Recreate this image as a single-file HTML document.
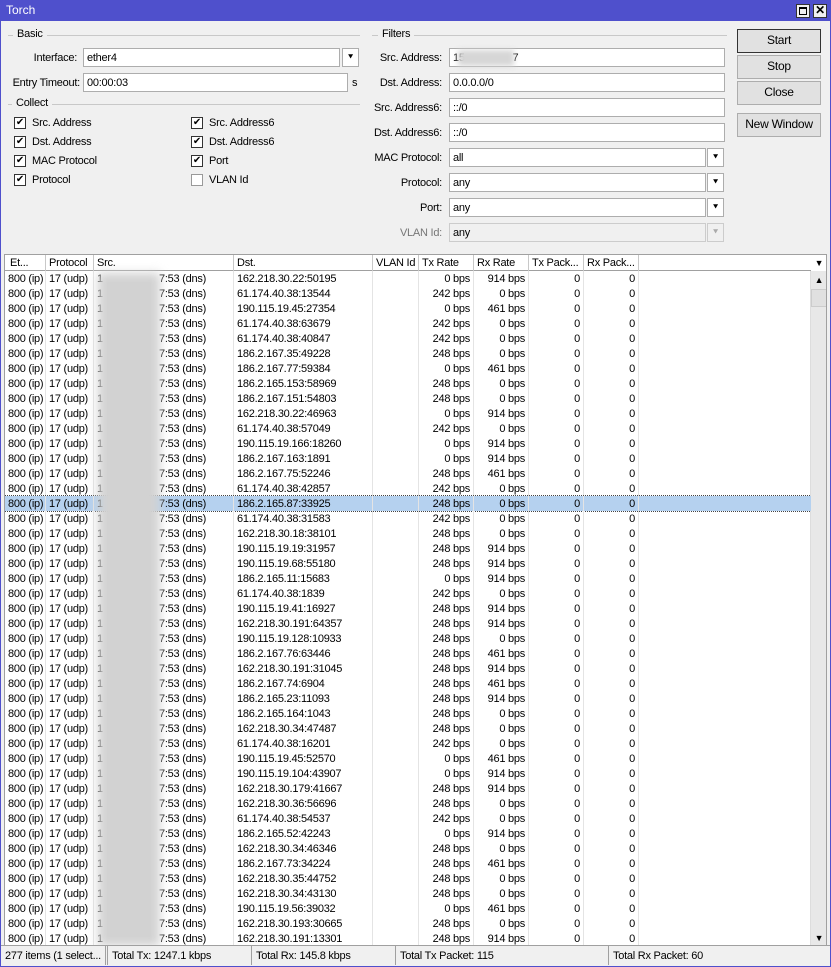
<!DOCTYPE html>
<html><head><meta charset="utf-8"><style>
*{box-sizing:border-box;margin:0;padding:0}
body{width:831px;height:967px;background:#4f50cc;font-family:"Liberation Sans",sans-serif;font-size:11px;letter-spacing:-0.25px;color:#000;position:relative;overflow:hidden}
.a{position:absolute}
#win{position:absolute;left:1px;top:21px;width:829px;height:945px;background:#f0f0f0}
.title{left:6px;top:3px;color:#fff;font-size:12px;letter-spacing:0}
.tb{top:4px;width:14px;height:14px;background:#f0f0f0;border:1px solid #333}
.lbl{text-align:right;white-space:nowrap}
.inp{background:#fff;border:1px solid #adadad;height:19px;padding:3px 3px 0;white-space:nowrap;overflow:hidden}
.dd{background:#fff;border:1px solid #adadad;width:17px;height:19px;font-size:9px;text-align:center;line-height:16px}
.leg{background:#f0f0f0;padding:0 4px}
.hl{height:1px;background:#c8c8c8}
.cb{width:12px;height:12px;border:1px solid #333;background:#fff;font-size:10px;line-height:10px;text-align:center}
.btn{left:737px;width:84px;height:24px;border:1px solid #adadad;background:#e1e1e1;text-align:center;line-height:21px;font-size:12px}
#tbl{left:4px;top:254px;width:823px;height:692px;background:#fff;border:1px solid #a0a0a0;overflow:hidden}
.hdr{position:absolute;top:0;height:16px;left:0;width:806px;background:#fff;border-bottom:1px solid #a0a0a0}
.hdr span{position:absolute;top:0;height:16px;border-right:1px solid #c8c8c8;padding:2px 3px;white-space:nowrap;overflow:hidden}
.r{position:absolute;left:0;width:806px;height:15px;white-space:nowrap}
.r span{position:absolute;top:0;height:15px;padding:2px 3px 0;border-right:1px solid #e4e4e4;overflow:hidden}
.c0{left:0;width:41px}.c1{left:41px;width:48px}.c2{left:89px;width:140px}.c3{left:229px;width:139px}.c4{left:368px;width:46px}.c5{left:414px;width:55px;text-align:right}.c6{left:469px;width:55px;text-align:right}.c7{left:524px;width:55px;text-align:right}.c8{left:579px;width:55px;text-align:right}
.sel{background:#b5d1ef;outline:1px dotted #444}
.blur{position:absolute;left:98px;top:273px;width:62px;height:673px;background:#d2d2d2;filter:blur(5px)}
.st{top:946px;height:19px;border-right:1px solid #a0a0a0;padding:4px 4px 0;white-space:nowrap}
</style></head><body>
<div class="a title">Torch</div>
<div class="a tb" style="left:796px"><div style="margin:2px;width:8px;height:8px;border:1px solid #000;border-top-width:2px"></div></div>
<div class="a tb" style="left:813px;font-size:12px;font-weight:bold;line-height:11px;text-align:center">✕</div>
<div id="win"></div>

<div class="a hl" style="left:8px;top:35px;width:352px"></div>
<div class="a leg" style="left:13px;top:28px">Basic</div>
<div class="a lbl" style="left:0;top:52px;width:77px">Interface:</div>
<div class="a inp" style="left:83px;top:48px;width:257px">ether4</div>
<div class="a dd" style="left:342px;top:48px">⯆</div>
<div class="a lbl" style="left:0;top:77px;width:80px">Entry Timeout:</div>
<div class="a inp" style="left:83px;top:73px;width:265px">00:00:03</div>
<div class="a" style="left:352px;top:77px">s</div>
<div class="a hl" style="left:8px;top:104px;width:352px"></div>
<div class="a leg" style="left:12px;top:97px">Collect</div>

<div class="a cb" style="left:14px;top:117px">✔</div><div class="a" style="left:32px;top:117px">Src. Address</div>
<div class="a cb" style="left:14px;top:136px">✔</div><div class="a" style="left:32px;top:136px">Dst. Address</div>
<div class="a cb" style="left:14px;top:155px">✔</div><div class="a" style="left:32px;top:155px">MAC Protocol</div>
<div class="a cb" style="left:14px;top:174px">✔</div><div class="a" style="left:32px;top:174px">Protocol</div>
<div class="a cb" style="left:191px;top:117px">✔</div><div class="a" style="left:209px;top:117px">Src. Address6</div>
<div class="a cb" style="left:191px;top:136px">✔</div><div class="a" style="left:209px;top:136px">Dst. Address6</div>
<div class="a cb" style="left:191px;top:155px">✔</div><div class="a" style="left:209px;top:155px">Port</div>
<div class="a cb" style="left:191px;top:174px;border-color:#999"></div><div class="a" style="left:209px;top:174px">VLAN Id</div>

<div class="a hl" style="left:372px;top:35px;width:355px"></div>
<div class="a leg" style="left:378px;top:28px">Filters</div>
<div class="a lbl" style="left:360px;top:52px;width:82px">Src. Address:</div>
<div class="a inp" style="left:449px;top:48px;width:276px">15&nbsp;&nbsp;&nbsp;&nbsp;&nbsp;&nbsp;&nbsp;&nbsp;&nbsp;&nbsp;&nbsp;&nbsp;&nbsp;&nbsp;&nbsp;&nbsp;&nbsp;7</div>
<div class="a" style="left:458px;top:50px;width:56px;height:16px;background:#d6d6d6;filter:blur(3px)"></div>
<div class="a lbl" style="left:360px;top:77px;width:82px">Dst. Address:</div>
<div class="a inp" style="left:449px;top:73px;width:276px">0.0.0.0/0</div>
<div class="a lbl" style="left:360px;top:102px;width:82px">Src. Address6:</div>
<div class="a inp" style="left:449px;top:98px;width:276px">::/0</div>
<div class="a lbl" style="left:360px;top:127px;width:82px">Dst. Address6:</div>
<div class="a inp" style="left:449px;top:123px;width:276px">::/0</div>
<div class="a lbl" style="left:360px;top:152px;width:82px">MAC Protocol:</div>
<div class="a inp" style="left:449px;top:148px;width:257px">all</div><div class="a dd" style="left:707px;top:148px">⯆</div>
<div class="a lbl" style="left:360px;top:177px;width:82px">Protocol:</div>
<div class="a inp" style="left:449px;top:173px;width:257px">any</div><div class="a dd" style="left:707px;top:173px">⯆</div>
<div class="a lbl" style="left:360px;top:202px;width:82px">Port:</div>
<div class="a inp" style="left:449px;top:198px;width:257px">any</div><div class="a dd" style="left:707px;top:198px">⯆</div>
<div class="a lbl" style="left:360px;top:227px;width:82px;color:#777">VLAN Id:</div>
<div class="a inp" style="left:449px;top:223px;width:257px;background:#f0f0f0;border-color:#ccc">any</div><div class="a dd" style="left:707px;top:223px;background:#f0f0f0;border-color:#ccc;color:#aaa">⯆</div>

<div class="a btn" style="top:29px;border-color:#333">Start</div>
<div class="a btn" style="top:55px">Stop</div>
<div class="a btn" style="top:81px">Close</div>
<div class="a btn" style="top:113px">New Window</div>

<div id="tbl" class="a">
<div class="hdr"><span style="left:0;width:41px;padding-left:5px">Et...</span><span style="left:41px;width:48px">Protocol</span><span style="left:89px;width:140px">Src.</span><span style="left:229px;width:139px">Dst.</span><span style="left:368px;width:46px">VLAN Id</span><span style="left:414px;width:55px">Tx Rate</span><span style="left:469px;width:55px">Rx Rate</span><span style="left:524px;width:55px">Tx Pack...</span><span style="left:579px;width:55px">Rx Pack...</span></div>
<div class="a" style="left:806px;top:0;width:16px;height:16px;text-align:center;font-size:9px;line-height:16px">▼</div>
<div class="a" style="left:805px;top:16px;width:17px;height:675px;background:#e8e8e8;border-left:1px solid #ddd"></div>
<div class="a" style="left:806px;top:17px;width:16px;height:16px;text-align:center;font-size:9px;line-height:16px">▲</div>
<div class="a" style="left:806px;top:34px;width:16px;height:18px;background:#e0e0e0;border:1px solid #ccc"></div>
<div class="a" style="left:806px;top:676px;width:16px;height:15px;text-align:center;font-size:9px;line-height:15px">▼</div>
</div>
<div class="a" style="left:5px;top:271px;width:806px;height:675px;overflow:hidden">
<div class="r" style="top:0"><span class="c0">800 (ip)</span><span class="c1">17 (udp)</span><span class="c2">1&nbsp;&nbsp;&nbsp;&nbsp;&nbsp;&nbsp;&nbsp;&nbsp;&nbsp;&nbsp;&nbsp;&nbsp;&nbsp;&nbsp;&nbsp;&nbsp;&nbsp;&nbsp;&nbsp;&nbsp;7:53 (dns)</span><span class="c3">162.218.30.22:50195</span><span class="c4"></span><span class="c5">0 bps</span><span class="c6">914 bps</span><span class="c7">0</span><span class="c8">0</span></div>
<div class="r" style="top:15px"><span class="c0">800 (ip)</span><span class="c1">17 (udp)</span><span class="c2">1&nbsp;&nbsp;&nbsp;&nbsp;&nbsp;&nbsp;&nbsp;&nbsp;&nbsp;&nbsp;&nbsp;&nbsp;&nbsp;&nbsp;&nbsp;&nbsp;&nbsp;&nbsp;&nbsp;&nbsp;7:53 (dns)</span><span class="c3">61.174.40.38:13544</span><span class="c4"></span><span class="c5">242 bps</span><span class="c6">0 bps</span><span class="c7">0</span><span class="c8">0</span></div>
<div class="r" style="top:30px"><span class="c0">800 (ip)</span><span class="c1">17 (udp)</span><span class="c2">1&nbsp;&nbsp;&nbsp;&nbsp;&nbsp;&nbsp;&nbsp;&nbsp;&nbsp;&nbsp;&nbsp;&nbsp;&nbsp;&nbsp;&nbsp;&nbsp;&nbsp;&nbsp;&nbsp;&nbsp;7:53 (dns)</span><span class="c3">190.115.19.45:27354</span><span class="c4"></span><span class="c5">0 bps</span><span class="c6">461 bps</span><span class="c7">0</span><span class="c8">0</span></div>
<div class="r" style="top:45px"><span class="c0">800 (ip)</span><span class="c1">17 (udp)</span><span class="c2">1&nbsp;&nbsp;&nbsp;&nbsp;&nbsp;&nbsp;&nbsp;&nbsp;&nbsp;&nbsp;&nbsp;&nbsp;&nbsp;&nbsp;&nbsp;&nbsp;&nbsp;&nbsp;&nbsp;&nbsp;7:53 (dns)</span><span class="c3">61.174.40.38:63679</span><span class="c4"></span><span class="c5">242 bps</span><span class="c6">0 bps</span><span class="c7">0</span><span class="c8">0</span></div>
<div class="r" style="top:60px"><span class="c0">800 (ip)</span><span class="c1">17 (udp)</span><span class="c2">1&nbsp;&nbsp;&nbsp;&nbsp;&nbsp;&nbsp;&nbsp;&nbsp;&nbsp;&nbsp;&nbsp;&nbsp;&nbsp;&nbsp;&nbsp;&nbsp;&nbsp;&nbsp;&nbsp;&nbsp;7:53 (dns)</span><span class="c3">61.174.40.38:40847</span><span class="c4"></span><span class="c5">242 bps</span><span class="c6">0 bps</span><span class="c7">0</span><span class="c8">0</span></div>
<div class="r" style="top:75px"><span class="c0">800 (ip)</span><span class="c1">17 (udp)</span><span class="c2">1&nbsp;&nbsp;&nbsp;&nbsp;&nbsp;&nbsp;&nbsp;&nbsp;&nbsp;&nbsp;&nbsp;&nbsp;&nbsp;&nbsp;&nbsp;&nbsp;&nbsp;&nbsp;&nbsp;&nbsp;7:53 (dns)</span><span class="c3">186.2.167.35:49228</span><span class="c4"></span><span class="c5">248 bps</span><span class="c6">0 bps</span><span class="c7">0</span><span class="c8">0</span></div>
<div class="r" style="top:90px"><span class="c0">800 (ip)</span><span class="c1">17 (udp)</span><span class="c2">1&nbsp;&nbsp;&nbsp;&nbsp;&nbsp;&nbsp;&nbsp;&nbsp;&nbsp;&nbsp;&nbsp;&nbsp;&nbsp;&nbsp;&nbsp;&nbsp;&nbsp;&nbsp;&nbsp;&nbsp;7:53 (dns)</span><span class="c3">186.2.167.77:59384</span><span class="c4"></span><span class="c5">0 bps</span><span class="c6">461 bps</span><span class="c7">0</span><span class="c8">0</span></div>
<div class="r" style="top:105px"><span class="c0">800 (ip)</span><span class="c1">17 (udp)</span><span class="c2">1&nbsp;&nbsp;&nbsp;&nbsp;&nbsp;&nbsp;&nbsp;&nbsp;&nbsp;&nbsp;&nbsp;&nbsp;&nbsp;&nbsp;&nbsp;&nbsp;&nbsp;&nbsp;&nbsp;&nbsp;7:53 (dns)</span><span class="c3">186.2.165.153:58969</span><span class="c4"></span><span class="c5">248 bps</span><span class="c6">0 bps</span><span class="c7">0</span><span class="c8">0</span></div>
<div class="r" style="top:120px"><span class="c0">800 (ip)</span><span class="c1">17 (udp)</span><span class="c2">1&nbsp;&nbsp;&nbsp;&nbsp;&nbsp;&nbsp;&nbsp;&nbsp;&nbsp;&nbsp;&nbsp;&nbsp;&nbsp;&nbsp;&nbsp;&nbsp;&nbsp;&nbsp;&nbsp;&nbsp;7:53 (dns)</span><span class="c3">186.2.167.151:54803</span><span class="c4"></span><span class="c5">248 bps</span><span class="c6">0 bps</span><span class="c7">0</span><span class="c8">0</span></div>
<div class="r" style="top:135px"><span class="c0">800 (ip)</span><span class="c1">17 (udp)</span><span class="c2">1&nbsp;&nbsp;&nbsp;&nbsp;&nbsp;&nbsp;&nbsp;&nbsp;&nbsp;&nbsp;&nbsp;&nbsp;&nbsp;&nbsp;&nbsp;&nbsp;&nbsp;&nbsp;&nbsp;&nbsp;7:53 (dns)</span><span class="c3">162.218.30.22:46963</span><span class="c4"></span><span class="c5">0 bps</span><span class="c6">914 bps</span><span class="c7">0</span><span class="c8">0</span></div>
<div class="r" style="top:150px"><span class="c0">800 (ip)</span><span class="c1">17 (udp)</span><span class="c2">1&nbsp;&nbsp;&nbsp;&nbsp;&nbsp;&nbsp;&nbsp;&nbsp;&nbsp;&nbsp;&nbsp;&nbsp;&nbsp;&nbsp;&nbsp;&nbsp;&nbsp;&nbsp;&nbsp;&nbsp;7:53 (dns)</span><span class="c3">61.174.40.38:57049</span><span class="c4"></span><span class="c5">242 bps</span><span class="c6">0 bps</span><span class="c7">0</span><span class="c8">0</span></div>
<div class="r" style="top:165px"><span class="c0">800 (ip)</span><span class="c1">17 (udp)</span><span class="c2">1&nbsp;&nbsp;&nbsp;&nbsp;&nbsp;&nbsp;&nbsp;&nbsp;&nbsp;&nbsp;&nbsp;&nbsp;&nbsp;&nbsp;&nbsp;&nbsp;&nbsp;&nbsp;&nbsp;&nbsp;7:53 (dns)</span><span class="c3">190.115.19.166:18260</span><span class="c4"></span><span class="c5">0 bps</span><span class="c6">914 bps</span><span class="c7">0</span><span class="c8">0</span></div>
<div class="r" style="top:180px"><span class="c0">800 (ip)</span><span class="c1">17 (udp)</span><span class="c2">1&nbsp;&nbsp;&nbsp;&nbsp;&nbsp;&nbsp;&nbsp;&nbsp;&nbsp;&nbsp;&nbsp;&nbsp;&nbsp;&nbsp;&nbsp;&nbsp;&nbsp;&nbsp;&nbsp;&nbsp;7:53 (dns)</span><span class="c3">186.2.167.163:1891</span><span class="c4"></span><span class="c5">0 bps</span><span class="c6">914 bps</span><span class="c7">0</span><span class="c8">0</span></div>
<div class="r" style="top:195px"><span class="c0">800 (ip)</span><span class="c1">17 (udp)</span><span class="c2">1&nbsp;&nbsp;&nbsp;&nbsp;&nbsp;&nbsp;&nbsp;&nbsp;&nbsp;&nbsp;&nbsp;&nbsp;&nbsp;&nbsp;&nbsp;&nbsp;&nbsp;&nbsp;&nbsp;&nbsp;7:53 (dns)</span><span class="c3">186.2.167.75:52246</span><span class="c4"></span><span class="c5">248 bps</span><span class="c6">461 bps</span><span class="c7">0</span><span class="c8">0</span></div>
<div class="r" style="top:210px"><span class="c0">800 (ip)</span><span class="c1">17 (udp)</span><span class="c2">1&nbsp;&nbsp;&nbsp;&nbsp;&nbsp;&nbsp;&nbsp;&nbsp;&nbsp;&nbsp;&nbsp;&nbsp;&nbsp;&nbsp;&nbsp;&nbsp;&nbsp;&nbsp;&nbsp;&nbsp;7:53 (dns)</span><span class="c3">61.174.40.38:42857</span><span class="c4"></span><span class="c5">242 bps</span><span class="c6">0 bps</span><span class="c7">0</span><span class="c8">0</span></div>
<div class="r sel" style="top:225px"><span class="c0">800 (ip)</span><span class="c1">17 (udp)</span><span class="c2">1&nbsp;&nbsp;&nbsp;&nbsp;&nbsp;&nbsp;&nbsp;&nbsp;&nbsp;&nbsp;&nbsp;&nbsp;&nbsp;&nbsp;&nbsp;&nbsp;&nbsp;&nbsp;&nbsp;&nbsp;7:53 (dns)</span><span class="c3">186.2.165.87:33925</span><span class="c4"></span><span class="c5">248 bps</span><span class="c6">0 bps</span><span class="c7">0</span><span class="c8">0</span></div>
<div class="r" style="top:240px"><span class="c0">800 (ip)</span><span class="c1">17 (udp)</span><span class="c2">1&nbsp;&nbsp;&nbsp;&nbsp;&nbsp;&nbsp;&nbsp;&nbsp;&nbsp;&nbsp;&nbsp;&nbsp;&nbsp;&nbsp;&nbsp;&nbsp;&nbsp;&nbsp;&nbsp;&nbsp;7:53 (dns)</span><span class="c3">61.174.40.38:31583</span><span class="c4"></span><span class="c5">242 bps</span><span class="c6">0 bps</span><span class="c7">0</span><span class="c8">0</span></div>
<div class="r" style="top:255px"><span class="c0">800 (ip)</span><span class="c1">17 (udp)</span><span class="c2">1&nbsp;&nbsp;&nbsp;&nbsp;&nbsp;&nbsp;&nbsp;&nbsp;&nbsp;&nbsp;&nbsp;&nbsp;&nbsp;&nbsp;&nbsp;&nbsp;&nbsp;&nbsp;&nbsp;&nbsp;7:53 (dns)</span><span class="c3">162.218.30.18:38101</span><span class="c4"></span><span class="c5">248 bps</span><span class="c6">0 bps</span><span class="c7">0</span><span class="c8">0</span></div>
<div class="r" style="top:270px"><span class="c0">800 (ip)</span><span class="c1">17 (udp)</span><span class="c2">1&nbsp;&nbsp;&nbsp;&nbsp;&nbsp;&nbsp;&nbsp;&nbsp;&nbsp;&nbsp;&nbsp;&nbsp;&nbsp;&nbsp;&nbsp;&nbsp;&nbsp;&nbsp;&nbsp;&nbsp;7:53 (dns)</span><span class="c3">190.115.19.19:31957</span><span class="c4"></span><span class="c5">248 bps</span><span class="c6">914 bps</span><span class="c7">0</span><span class="c8">0</span></div>
<div class="r" style="top:285px"><span class="c0">800 (ip)</span><span class="c1">17 (udp)</span><span class="c2">1&nbsp;&nbsp;&nbsp;&nbsp;&nbsp;&nbsp;&nbsp;&nbsp;&nbsp;&nbsp;&nbsp;&nbsp;&nbsp;&nbsp;&nbsp;&nbsp;&nbsp;&nbsp;&nbsp;&nbsp;7:53 (dns)</span><span class="c3">190.115.19.68:55180</span><span class="c4"></span><span class="c5">248 bps</span><span class="c6">914 bps</span><span class="c7">0</span><span class="c8">0</span></div>
<div class="r" style="top:300px"><span class="c0">800 (ip)</span><span class="c1">17 (udp)</span><span class="c2">1&nbsp;&nbsp;&nbsp;&nbsp;&nbsp;&nbsp;&nbsp;&nbsp;&nbsp;&nbsp;&nbsp;&nbsp;&nbsp;&nbsp;&nbsp;&nbsp;&nbsp;&nbsp;&nbsp;&nbsp;7:53 (dns)</span><span class="c3">186.2.165.11:15683</span><span class="c4"></span><span class="c5">0 bps</span><span class="c6">914 bps</span><span class="c7">0</span><span class="c8">0</span></div>
<div class="r" style="top:315px"><span class="c0">800 (ip)</span><span class="c1">17 (udp)</span><span class="c2">1&nbsp;&nbsp;&nbsp;&nbsp;&nbsp;&nbsp;&nbsp;&nbsp;&nbsp;&nbsp;&nbsp;&nbsp;&nbsp;&nbsp;&nbsp;&nbsp;&nbsp;&nbsp;&nbsp;&nbsp;7:53 (dns)</span><span class="c3">61.174.40.38:1839</span><span class="c4"></span><span class="c5">242 bps</span><span class="c6">0 bps</span><span class="c7">0</span><span class="c8">0</span></div>
<div class="r" style="top:330px"><span class="c0">800 (ip)</span><span class="c1">17 (udp)</span><span class="c2">1&nbsp;&nbsp;&nbsp;&nbsp;&nbsp;&nbsp;&nbsp;&nbsp;&nbsp;&nbsp;&nbsp;&nbsp;&nbsp;&nbsp;&nbsp;&nbsp;&nbsp;&nbsp;&nbsp;&nbsp;7:53 (dns)</span><span class="c3">190.115.19.41:16927</span><span class="c4"></span><span class="c5">248 bps</span><span class="c6">914 bps</span><span class="c7">0</span><span class="c8">0</span></div>
<div class="r" style="top:345px"><span class="c0">800 (ip)</span><span class="c1">17 (udp)</span><span class="c2">1&nbsp;&nbsp;&nbsp;&nbsp;&nbsp;&nbsp;&nbsp;&nbsp;&nbsp;&nbsp;&nbsp;&nbsp;&nbsp;&nbsp;&nbsp;&nbsp;&nbsp;&nbsp;&nbsp;&nbsp;7:53 (dns)</span><span class="c3">162.218.30.191:64357</span><span class="c4"></span><span class="c5">248 bps</span><span class="c6">914 bps</span><span class="c7">0</span><span class="c8">0</span></div>
<div class="r" style="top:360px"><span class="c0">800 (ip)</span><span class="c1">17 (udp)</span><span class="c2">1&nbsp;&nbsp;&nbsp;&nbsp;&nbsp;&nbsp;&nbsp;&nbsp;&nbsp;&nbsp;&nbsp;&nbsp;&nbsp;&nbsp;&nbsp;&nbsp;&nbsp;&nbsp;&nbsp;&nbsp;7:53 (dns)</span><span class="c3">190.115.19.128:10933</span><span class="c4"></span><span class="c5">248 bps</span><span class="c6">0 bps</span><span class="c7">0</span><span class="c8">0</span></div>
<div class="r" style="top:375px"><span class="c0">800 (ip)</span><span class="c1">17 (udp)</span><span class="c2">1&nbsp;&nbsp;&nbsp;&nbsp;&nbsp;&nbsp;&nbsp;&nbsp;&nbsp;&nbsp;&nbsp;&nbsp;&nbsp;&nbsp;&nbsp;&nbsp;&nbsp;&nbsp;&nbsp;&nbsp;7:53 (dns)</span><span class="c3">186.2.167.76:63446</span><span class="c4"></span><span class="c5">248 bps</span><span class="c6">461 bps</span><span class="c7">0</span><span class="c8">0</span></div>
<div class="r" style="top:390px"><span class="c0">800 (ip)</span><span class="c1">17 (udp)</span><span class="c2">1&nbsp;&nbsp;&nbsp;&nbsp;&nbsp;&nbsp;&nbsp;&nbsp;&nbsp;&nbsp;&nbsp;&nbsp;&nbsp;&nbsp;&nbsp;&nbsp;&nbsp;&nbsp;&nbsp;&nbsp;7:53 (dns)</span><span class="c3">162.218.30.191:31045</span><span class="c4"></span><span class="c5">248 bps</span><span class="c6">914 bps</span><span class="c7">0</span><span class="c8">0</span></div>
<div class="r" style="top:405px"><span class="c0">800 (ip)</span><span class="c1">17 (udp)</span><span class="c2">1&nbsp;&nbsp;&nbsp;&nbsp;&nbsp;&nbsp;&nbsp;&nbsp;&nbsp;&nbsp;&nbsp;&nbsp;&nbsp;&nbsp;&nbsp;&nbsp;&nbsp;&nbsp;&nbsp;&nbsp;7:53 (dns)</span><span class="c3">186.2.167.74:6904</span><span class="c4"></span><span class="c5">248 bps</span><span class="c6">461 bps</span><span class="c7">0</span><span class="c8">0</span></div>
<div class="r" style="top:420px"><span class="c0">800 (ip)</span><span class="c1">17 (udp)</span><span class="c2">1&nbsp;&nbsp;&nbsp;&nbsp;&nbsp;&nbsp;&nbsp;&nbsp;&nbsp;&nbsp;&nbsp;&nbsp;&nbsp;&nbsp;&nbsp;&nbsp;&nbsp;&nbsp;&nbsp;&nbsp;7:53 (dns)</span><span class="c3">186.2.165.23:11093</span><span class="c4"></span><span class="c5">248 bps</span><span class="c6">914 bps</span><span class="c7">0</span><span class="c8">0</span></div>
<div class="r" style="top:435px"><span class="c0">800 (ip)</span><span class="c1">17 (udp)</span><span class="c2">1&nbsp;&nbsp;&nbsp;&nbsp;&nbsp;&nbsp;&nbsp;&nbsp;&nbsp;&nbsp;&nbsp;&nbsp;&nbsp;&nbsp;&nbsp;&nbsp;&nbsp;&nbsp;&nbsp;&nbsp;7:53 (dns)</span><span class="c3">186.2.165.164:1043</span><span class="c4"></span><span class="c5">248 bps</span><span class="c6">0 bps</span><span class="c7">0</span><span class="c8">0</span></div>
<div class="r" style="top:450px"><span class="c0">800 (ip)</span><span class="c1">17 (udp)</span><span class="c2">1&nbsp;&nbsp;&nbsp;&nbsp;&nbsp;&nbsp;&nbsp;&nbsp;&nbsp;&nbsp;&nbsp;&nbsp;&nbsp;&nbsp;&nbsp;&nbsp;&nbsp;&nbsp;&nbsp;&nbsp;7:53 (dns)</span><span class="c3">162.218.30.34:47487</span><span class="c4"></span><span class="c5">248 bps</span><span class="c6">0 bps</span><span class="c7">0</span><span class="c8">0</span></div>
<div class="r" style="top:465px"><span class="c0">800 (ip)</span><span class="c1">17 (udp)</span><span class="c2">1&nbsp;&nbsp;&nbsp;&nbsp;&nbsp;&nbsp;&nbsp;&nbsp;&nbsp;&nbsp;&nbsp;&nbsp;&nbsp;&nbsp;&nbsp;&nbsp;&nbsp;&nbsp;&nbsp;&nbsp;7:53 (dns)</span><span class="c3">61.174.40.38:16201</span><span class="c4"></span><span class="c5">242 bps</span><span class="c6">0 bps</span><span class="c7">0</span><span class="c8">0</span></div>
<div class="r" style="top:480px"><span class="c0">800 (ip)</span><span class="c1">17 (udp)</span><span class="c2">1&nbsp;&nbsp;&nbsp;&nbsp;&nbsp;&nbsp;&nbsp;&nbsp;&nbsp;&nbsp;&nbsp;&nbsp;&nbsp;&nbsp;&nbsp;&nbsp;&nbsp;&nbsp;&nbsp;&nbsp;7:53 (dns)</span><span class="c3">190.115.19.45:52570</span><span class="c4"></span><span class="c5">0 bps</span><span class="c6">461 bps</span><span class="c7">0</span><span class="c8">0</span></div>
<div class="r" style="top:495px"><span class="c0">800 (ip)</span><span class="c1">17 (udp)</span><span class="c2">1&nbsp;&nbsp;&nbsp;&nbsp;&nbsp;&nbsp;&nbsp;&nbsp;&nbsp;&nbsp;&nbsp;&nbsp;&nbsp;&nbsp;&nbsp;&nbsp;&nbsp;&nbsp;&nbsp;&nbsp;7:53 (dns)</span><span class="c3">190.115.19.104:43907</span><span class="c4"></span><span class="c5">0 bps</span><span class="c6">914 bps</span><span class="c7">0</span><span class="c8">0</span></div>
<div class="r" style="top:510px"><span class="c0">800 (ip)</span><span class="c1">17 (udp)</span><span class="c2">1&nbsp;&nbsp;&nbsp;&nbsp;&nbsp;&nbsp;&nbsp;&nbsp;&nbsp;&nbsp;&nbsp;&nbsp;&nbsp;&nbsp;&nbsp;&nbsp;&nbsp;&nbsp;&nbsp;&nbsp;7:53 (dns)</span><span class="c3">162.218.30.179:41667</span><span class="c4"></span><span class="c5">248 bps</span><span class="c6">914 bps</span><span class="c7">0</span><span class="c8">0</span></div>
<div class="r" style="top:525px"><span class="c0">800 (ip)</span><span class="c1">17 (udp)</span><span class="c2">1&nbsp;&nbsp;&nbsp;&nbsp;&nbsp;&nbsp;&nbsp;&nbsp;&nbsp;&nbsp;&nbsp;&nbsp;&nbsp;&nbsp;&nbsp;&nbsp;&nbsp;&nbsp;&nbsp;&nbsp;7:53 (dns)</span><span class="c3">162.218.30.36:56696</span><span class="c4"></span><span class="c5">248 bps</span><span class="c6">0 bps</span><span class="c7">0</span><span class="c8">0</span></div>
<div class="r" style="top:540px"><span class="c0">800 (ip)</span><span class="c1">17 (udp)</span><span class="c2">1&nbsp;&nbsp;&nbsp;&nbsp;&nbsp;&nbsp;&nbsp;&nbsp;&nbsp;&nbsp;&nbsp;&nbsp;&nbsp;&nbsp;&nbsp;&nbsp;&nbsp;&nbsp;&nbsp;&nbsp;7:53 (dns)</span><span class="c3">61.174.40.38:54537</span><span class="c4"></span><span class="c5">242 bps</span><span class="c6">0 bps</span><span class="c7">0</span><span class="c8">0</span></div>
<div class="r" style="top:555px"><span class="c0">800 (ip)</span><span class="c1">17 (udp)</span><span class="c2">1&nbsp;&nbsp;&nbsp;&nbsp;&nbsp;&nbsp;&nbsp;&nbsp;&nbsp;&nbsp;&nbsp;&nbsp;&nbsp;&nbsp;&nbsp;&nbsp;&nbsp;&nbsp;&nbsp;&nbsp;7:53 (dns)</span><span class="c3">186.2.165.52:42243</span><span class="c4"></span><span class="c5">0 bps</span><span class="c6">914 bps</span><span class="c7">0</span><span class="c8">0</span></div>
<div class="r" style="top:570px"><span class="c0">800 (ip)</span><span class="c1">17 (udp)</span><span class="c2">1&nbsp;&nbsp;&nbsp;&nbsp;&nbsp;&nbsp;&nbsp;&nbsp;&nbsp;&nbsp;&nbsp;&nbsp;&nbsp;&nbsp;&nbsp;&nbsp;&nbsp;&nbsp;&nbsp;&nbsp;7:53 (dns)</span><span class="c3">162.218.30.34:46346</span><span class="c4"></span><span class="c5">248 bps</span><span class="c6">0 bps</span><span class="c7">0</span><span class="c8">0</span></div>
<div class="r" style="top:585px"><span class="c0">800 (ip)</span><span class="c1">17 (udp)</span><span class="c2">1&nbsp;&nbsp;&nbsp;&nbsp;&nbsp;&nbsp;&nbsp;&nbsp;&nbsp;&nbsp;&nbsp;&nbsp;&nbsp;&nbsp;&nbsp;&nbsp;&nbsp;&nbsp;&nbsp;&nbsp;7:53 (dns)</span><span class="c3">186.2.167.73:34224</span><span class="c4"></span><span class="c5">248 bps</span><span class="c6">461 bps</span><span class="c7">0</span><span class="c8">0</span></div>
<div class="r" style="top:600px"><span class="c0">800 (ip)</span><span class="c1">17 (udp)</span><span class="c2">1&nbsp;&nbsp;&nbsp;&nbsp;&nbsp;&nbsp;&nbsp;&nbsp;&nbsp;&nbsp;&nbsp;&nbsp;&nbsp;&nbsp;&nbsp;&nbsp;&nbsp;&nbsp;&nbsp;&nbsp;7:53 (dns)</span><span class="c3">162.218.30.35:44752</span><span class="c4"></span><span class="c5">248 bps</span><span class="c6">0 bps</span><span class="c7">0</span><span class="c8">0</span></div>
<div class="r" style="top:615px"><span class="c0">800 (ip)</span><span class="c1">17 (udp)</span><span class="c2">1&nbsp;&nbsp;&nbsp;&nbsp;&nbsp;&nbsp;&nbsp;&nbsp;&nbsp;&nbsp;&nbsp;&nbsp;&nbsp;&nbsp;&nbsp;&nbsp;&nbsp;&nbsp;&nbsp;&nbsp;7:53 (dns)</span><span class="c3">162.218.30.34:43130</span><span class="c4"></span><span class="c5">248 bps</span><span class="c6">0 bps</span><span class="c7">0</span><span class="c8">0</span></div>
<div class="r" style="top:630px"><span class="c0">800 (ip)</span><span class="c1">17 (udp)</span><span class="c2">1&nbsp;&nbsp;&nbsp;&nbsp;&nbsp;&nbsp;&nbsp;&nbsp;&nbsp;&nbsp;&nbsp;&nbsp;&nbsp;&nbsp;&nbsp;&nbsp;&nbsp;&nbsp;&nbsp;&nbsp;7:53 (dns)</span><span class="c3">190.115.19.56:39032</span><span class="c4"></span><span class="c5">0 bps</span><span class="c6">461 bps</span><span class="c7">0</span><span class="c8">0</span></div>
<div class="r" style="top:645px"><span class="c0">800 (ip)</span><span class="c1">17 (udp)</span><span class="c2">1&nbsp;&nbsp;&nbsp;&nbsp;&nbsp;&nbsp;&nbsp;&nbsp;&nbsp;&nbsp;&nbsp;&nbsp;&nbsp;&nbsp;&nbsp;&nbsp;&nbsp;&nbsp;&nbsp;&nbsp;7:53 (dns)</span><span class="c3">162.218.30.193:30665</span><span class="c4"></span><span class="c5">248 bps</span><span class="c6">0 bps</span><span class="c7">0</span><span class="c8">0</span></div>
<div class="r" style="top:660px"><span class="c0">800 (ip)</span><span class="c1">17 (udp)</span><span class="c2">1&nbsp;&nbsp;&nbsp;&nbsp;&nbsp;&nbsp;&nbsp;&nbsp;&nbsp;&nbsp;&nbsp;&nbsp;&nbsp;&nbsp;&nbsp;&nbsp;&nbsp;&nbsp;&nbsp;&nbsp;7:53 (dns)</span><span class="c3">162.218.30.191:13301</span><span class="c4"></span><span class="c5">248 bps</span><span class="c6">914 bps</span><span class="c7">0</span><span class="c8">0</span></div>
</div>
<div class="blur"></div>

<div class="a" style="left:1px;top:945px;width:829px;height:21px;background:#f0f0f0;border-top:1px solid #a0a0a0"></div>
<div class="a st" style="left:1px">277 items (1 select...</div>
<div class="a st" style="left:107px;border-left:1px solid #a0a0a0;width:145px">Total Tx: 1247.1 kbps</div>
<div class="a st" style="left:252px;width:144px">Total Rx: 145.8 kbps</div>
<div class="a st" style="left:396px;width:213px">Total Tx Packet: 115</div>
<div class="a st" style="left:609px;border:none">Total Rx Packet: 60</div>
</body></html>
